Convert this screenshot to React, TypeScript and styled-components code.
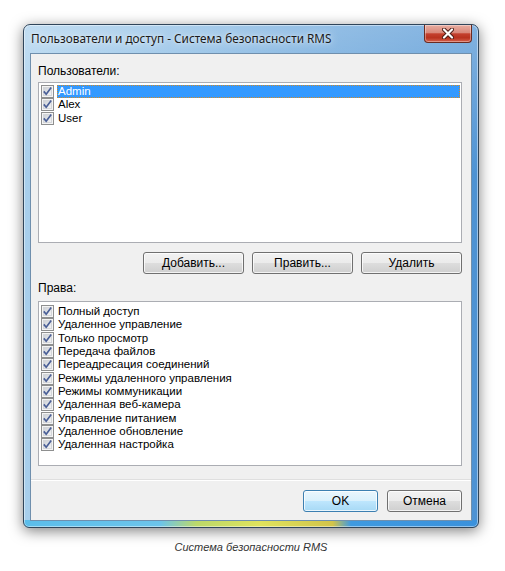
import styled, { createGlobalStyle } from "styled-components";

const GlobalStyle = createGlobalStyle`
  body {
    margin: 0;
    background: #ffffff;
    font-family: "Liberation Sans", Arial, sans-serif;
  }
`;

const Page = styled.div`
  width: 505px;
  height: 571px;
  padding: 24px 0 0 23px;
  box-sizing: border-box;
`;

const Window = styled.div`
  width: 456px;
  height: 504px;
  box-sizing: border-box;
  display: flex;
  flex-direction: column;
  border: 1px solid #30455a;
  border-radius: 7px 7px 6px 6px;
  box-shadow: 0 3px 14px rgba(0, 0, 0, 0.5), inset 0 0 0 1px rgba(255, 255, 255, 0.45);
  background:
    linear-gradient(
        to right,
        #5bbdea 0%,
        #6cc4ea 30%,
        #bcd96a 38%,
        #dfe35c 52%,
        #d2c44a 68%,
        #3f9ae0 72%,
        #3a91dc 100%
      )
      bottom / 100% 7px no-repeat,
    linear-gradient(to bottom, rgba(255, 255, 255, 0.3), rgba(255, 255, 255, 0) 30%),
    linear-gradient(to right, #a8cfec 0%, #86b9e3 35%, #63a1d9 70%, #4d92d3 100%);
`;

const TitleBar = styled.div`
  height: 28px;
  display: flex;
  align-items: center;
  justify-content: space-between;
  padding: 0 6px 0 7px;
`;

const Title = styled.span`
  font-family: "Noto Sans", "Open Sans", sans-serif;
  font-size: 11.8px;
  color: #1a1a1a;
  text-shadow: 0 0 8px rgba(255, 255, 255, 0.9), 0 0 3px rgba(255, 255, 255, 0.6);
  padding-bottom: 2px;
`;

const CloseButton = styled.div`
  align-self: flex-start;
  width: 48px;
  height: 18px;
  box-sizing: border-box;
  display: flex;
  align-items: center;
  justify-content: center;
  border: 1px solid #6b2b21;
  border-top: none;
  border-radius: 0 0 4px 4px;
  box-shadow: inset 0 0 0 1px rgba(255, 255, 255, 0.35);
  background: linear-gradient(
    to bottom,
    #e8ada1 0%,
    #d9887a 45%,
    #c4402e 52%,
    #b8321f 75%,
    #d6624e 100%
  );
`;

const Client = styled.div`
  flex: 1;
  margin: 0 6px 6px 6px;
  display: flex;
  flex-direction: column;
  border: 1px solid #6f8fad;
  background: #f0f0f0;
`;

const Body = styled.div`
  display: flex;
  flex-direction: column;
  padding: 10px 9px 0 7px;
`;

const Label = styled.div<{ $top?: number; $bottom: number }>`
  font-size: 12px;
  line-height: 15px;
  color: #000;
  margin-top: ${(p) => p.$top ?? 0}px;
  margin-bottom: ${(p) => p.$bottom}px;
`;

const ListBox = styled.div<{ $height: number; $pad: number }>`
  height: ${(p) => p.$height}px;
  box-sizing: border-box;
  background: #ffffff;
  border: 1px solid #abadb3;
  padding: ${(p) => p.$pad}px 1px 0 2px;
`;

const Row = styled.div`
  display: flex;
  align-items: center;
  height: 13.3px;
  gap: 3px;
`;

const ItemText = styled.span<{ $selected?: boolean }>`
  flex: ${(p) => (p.$selected ? 1 : "none")};
  font-size: 11.5px;
  line-height: 13px;
  height: 13px;
  padding: 0 1px;
  box-sizing: border-box;
  color: ${(p) => (p.$selected ? "#ffffff" : "#000000")};
  background: ${(p) => (p.$selected ? "#3399ff" : "transparent")};
  outline: ${(p) => (p.$selected ? "1px dotted #d08a2a" : "none")};
  outline-offset: -1px;
`;

const ButtonRow = styled.div`
  display: flex;
  justify-content: flex-end;
  gap: 8px;
  margin-top: 9px;
`;

const Button = styled.button<{ $width: number; $default?: boolean }>`
  width: ${(p) => p.$width}px;
  height: 22px;
  padding: 0;
  font-family: inherit;
  font-size: 12px;
  color: #000;
  border-radius: 3px;
  border: 1px solid ${(p) => (p.$default ? "#3c7fb1" : "#707070")};
  box-shadow: inset 0 0 0 1px rgba(255, 255, 255, 0.75);
  background: ${(p) =>
    p.$default
      ? "linear-gradient(to bottom, #eaf6fd 0%, #d9f0fc 50%, #bee6fd 51%, #a7d9f5 100%)"
      : "linear-gradient(to bottom, #f2f2f2 0%, #ebebeb 50%, #dddddd 51%, #cfcfcf 100%)"};
`;

const Footer = styled.div`
  flex: 1;
  margin-top: 13px;
  border-top: 1px solid #dfdfdf;
  box-shadow: inset 0 1px 0 #ffffff;
  padding: 10px 9px 0 0;
  display: flex;
  justify-content: flex-end;
  gap: 9px;
`;

const Caption = styled.div`
  width: 456px;
  margin-top: 13px;
  text-align: center;
  font-style: italic;
  font-size: 11px;
  color: #333333;
`;

const CheckBox = () => (
  <svg width="13" height="13" viewBox="0 0 13 13">
    <defs>
      <linearGradient id="cbfill" x1="0" y1="0" x2="1" y2="1">
        <stop offset="0" stopColor="#cbcfd5" />
        <stop offset="1" stopColor="#f6f6f6" />
      </linearGradient>
    </defs>
    <rect x="0.5" y="0.5" width="12" height="12" fill="#f4f4f4" stroke="#8e8f8f" />
    <rect x="2.5" y="2.5" width="8" height="8" fill="url(#cbfill)" stroke="#d4d6d9" />
    <path d="M2.8 6.4 L5.2 9.2 L10.2 2.6" fill="none" stroke="#4a5f97" strokeWidth="1.7" />
  </svg>
);

const CloseGlyph = () => (
  <svg width="12" height="11" viewBox="0 0 12 11">
    <path d="M2 1.5 L10 9.5 M10 1.5 L2 9.5" stroke="#4a1a14" strokeWidth="4" strokeLinecap="round" />
    <path d="M2 1.5 L10 9.5 M10 1.5 L2 9.5" stroke="#ffffff" strokeWidth="2.2" strokeLinecap="round" />
  </svg>
);

const users = ["Admin", "Alex", "User"];

const rights = [
  "Полный доступ",
  "Удаленное управление",
  "Только просмотр",
  "Передача файлов",
  "Переадресация соединений",
  "Режимы удаленного управления",
  "Режимы коммуникации",
  "Удаленная веб-камера",
  "Управление питанием",
  "Удаленное обновление",
  "Удаленная настройка",
];

const App = () => {
  return (
    <>
      <GlobalStyle />
      <Page>
        <Window>
          <TitleBar>
            <Title>Пользователи и доступ - Система безопасности RMS</Title>
            <CloseButton>
              <CloseGlyph />
            </CloseButton>
          </TitleBar>
          <Client>
            <Body>
              <Label $bottom={3}>Пользователи:</Label>
              <ListBox $height={161} $pad={2}>
                {users.map((u, i) => (
                  <Row key={u}>
                    <CheckBox />
                    <ItemText $selected={i === 0}>{u}</ItemText>
                  </Row>
                ))}
              </ListBox>
              <ButtonRow>
                <Button $width={101}>Добавить...</Button>
                <Button $width={101}>Править...</Button>
                <Button $width={101}>Удалить</Button>
              </ButtonRow>
              <Label $top={7} $bottom={5}>
                Права:
              </Label>
              <ListBox $height={165} $pad={3}>
                {rights.map((r) => (
                  <Row key={r}>
                    <CheckBox />
                    <ItemText>{r}</ItemText>
                  </Row>
                ))}
              </ListBox>
            </Body>
            <Footer>
              <Button $width={75} $default>
                OK
              </Button>
              <Button $width={75}>Отмена</Button>
            </Footer>
          </Client>
        </Window>
        <Caption>Система безопасности RMS</Caption>
      </Page>
    </>
  );
};

export default App;
